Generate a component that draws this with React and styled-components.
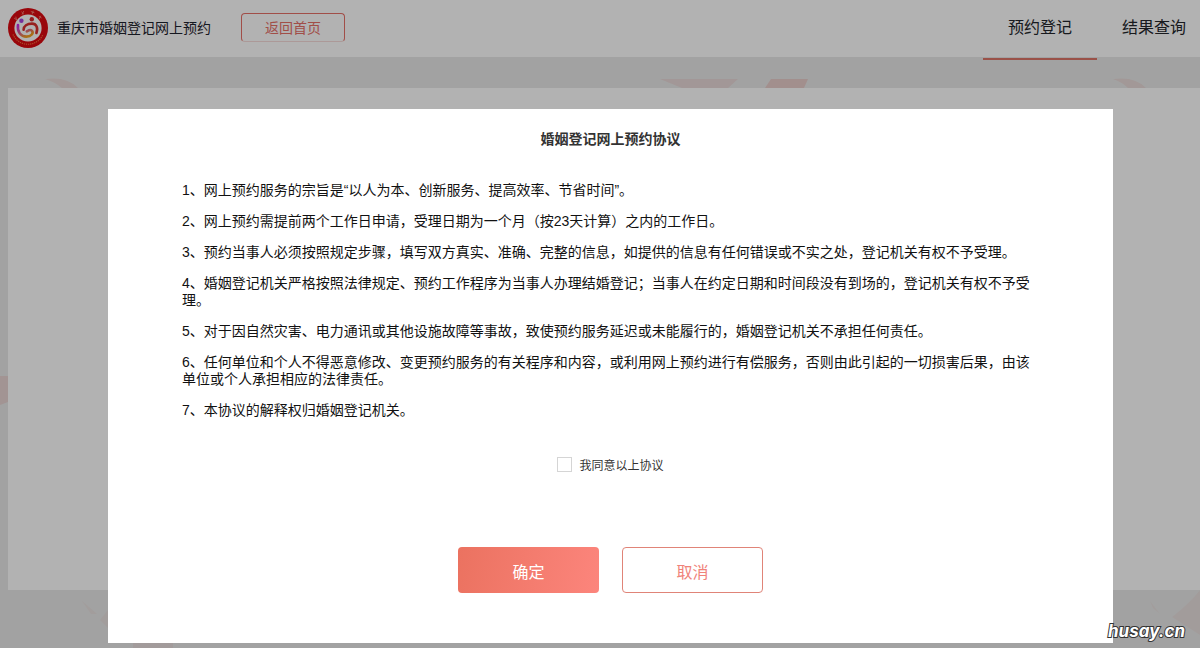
import React, { useState } from "react";
import styled, { createGlobalStyle, css } from "styled-components";

const GlobalStyle = createGlobalStyle`
  *, *::before, *::after { box-sizing: border-box; }
  body {
    margin: 0;
    background: #e9e9e9;
    color: #333;
    font-family: "Liberation Sans", "Noto Sans CJK SC", sans-serif;
    font-size: 14px;
  }
  button, input { font-family: inherit; }
`;

const Page = styled.div`
  position: relative;
  min-height: 100vh;
  overflow: hidden;
`;

const Header = styled.header`
  position: relative;
  display: flex;
  align-items: center;
  height: 57px;
  padding: 0 0 2px 8px;
  background: #fff;
`;

const Logo = styled.svg`
  flex: none;
  width: 40px;
  height: 40px;
`;

const SiteName = styled.span`
  margin-left: 9px;
  color: #1f232e;
  line-height: 20px;
`;

const HomeButton = styled.button`
  width: 104px;
  height: 29px;
  margin-left: 30px;
  padding: 0;
  border: 1px solid #e77068;
  border-bottom-color: #f6dcda;
  border-radius: 4px;
  background: transparent;
  color: #e77068;
  font-size: 14px;
  line-height: 20px;
`;

const Nav = styled.nav`
  display: flex;
  align-self: stretch;
  margin-left: auto;
`;

const NavLink = styled.a`
  height: 60px;
  padding: 16px 25px 0;
  border-bottom: 2px solid transparent;
  color: #23262b;
  font-size: 16px;
  line-height: 24px;
  text-decoration: none;

  ${(p) => p.$active && css`border-bottom-color: #dd7467;`}

  &:last-child { padding-right: 14px; }
`;

const Backdrop = styled.svg`
  position: absolute;
  inset: 0;
  width: 100%;
  height: 100%;
`;

const Panel = styled.main`
  position: relative;
  height: 502px;
  margin: 31px 0 0 8px;
  background: #fff;
`;

const Overlay = styled.div`
  position: absolute;
  inset: 0;
  padding: 109px 87px 5px 108px;
  background: rgba(0, 0, 0, 0.3);
`;

const Dialog = styled.section`
  display: flex;
  flex-direction: column;
  align-items: center;
  padding: 20px 74px 50px;
  background: #fff;
`;

const DialogTitle = styled.h1`
  margin: 0 0 33px;
  font-size: 14px;
  font-weight: 700;
  line-height: 20px;
`;

const Terms = styled.div`
  display: flex;
  flex-direction: column;
  gap: 14px;
  width: 100%;
`;

const Term = styled.p`
  margin: 0;
  color: #111;
  line-height: 17px;
`;

const Agree = styled.label`
  display: flex;
  align-items: center;
  gap: 7px;
  height: 20px;
  margin-top: 35px;
  font-size: 12px;
`;

const Checkbox = styled.input`
  appearance: none;
  width: 15px;
  height: 15px;
  margin: 0;
  border: 1px solid #d5d5d5;
  background: #fff;

  &:checked { background: #f57c6f; }
`;

const Actions = styled.div`
  display: flex;
  gap: 23px;
  margin-top: 73px;
`;

const ActionButton = styled.button`
  width: 141px;
  height: 46px;
  padding: 6px 0 0;
  border: ${(p) => (p.$primary ? "0" : "1px solid #e08478")};
  border-radius: 4px;
  background: ${(p) => (p.$primary ? "linear-gradient(100deg, #eb7260, #fc857c)" : "#fff")};
  color: ${(p) => (p.$primary ? "#fff" : "#f0837a")};
  font-size: 16px;
  line-height: 24px;
`;

const Watermark = styled.span`
  position: absolute;
  right: 15px;
  bottom: 7px;
  color: #fff;
  font: italic 700 17px/20px Inter, "Liberation Sans", sans-serif;
  -webkit-text-stroke: 2px #333;
  paint-order: stroke fill;
`;

const terms = [
  "网上预约服务的宗旨是“以人为本、创新服务、提高效率、节省时间”。",
  "网上预约需提前两个工作日申请，受理日期为一个月（按23天计算）之内的工作日。",
  "预约当事人必须按照规定步骤，填写双方真实、准确、完整的信息，如提供的信息有任何错误或不实之处，登记机关有权不予受理。",
  "婚姻登记机关严格按照法律规定、预约工作程序为当事人办理结婚登记；当事人在约定日期和时间段没有到场的，登记机关有权不予受理。",
  "对于因自然灾害、电力通讯或其他设施故障等事故，致使预约服务延迟或未能履行的，婚姻登记机关不承担任何责任。",
  "任何单位和个人不得恶意修改、变更预约服务的有关程序和内容，或利用网上预约进行有偿服务，否则由此引起的一切损害后果，由该单位或个人承担相应的法律责任。",
  "本协议的解释权归婚姻登记机关。",
];

function Emblem() {
  return (
    <Logo viewBox="0 0 40 40" aria-hidden="true">
      <defs>
        <linearGradient id="leftHand" x1="0" y1="0" x2="0.6" y2="1">
          <stop offset="0" stopColor="#c82bea" />
          <stop offset="0.5" stopColor="#d9569a" />
          <stop offset="1" stopColor="#f2a020" />
        </linearGradient>
      </defs>
      <circle cx="20" cy="20" r="20" fill="#dc0a10" />
      <circle cx="20" cy="20" r="13.6" fill="#fff" />
      <path d="M5 26.5 A16.4 16.4 0 0 0 35 26.5" fill="none" stroke="#f5733f" strokeWidth="1.2" strokeDasharray="1.2 0.9" />
      <g stroke="#f58a7e" strokeWidth="0.8" fill="none">
        <path d="M6.2 10.2l3 2M7.8 8.7l.8 3.5M13.4 3.8l2.5 2.4M15.8 3l-1.8 3.6M22.8 3.5l3.6 1.3M25.2 2.8l-1.1 3.6M30.8 8.2l2.8 1.8M32.8 7.8l-1.7 3.6" />
      </g>
      <circle cx="13.4" cy="12.8" r="2.2" fill="#a845e0" />
      <circle cx="23.8" cy="11.2" r="2.2" fill="#d8262a" />
      <path d="M10 17 C9 24 13 28.6 18.4 28.6 C23.4 28.6 26 25 23.8 22.6 C22.2 21 20.2 22.6 18.8 23.4" fill="none" stroke="url(#leftHand)" strokeWidth="2.6" strokeLinecap="round" />
      <path d="M28.4 25 C30.4 19.6 28.2 15.6 24 15.6 C19.2 15.6 15.6 18 15.6 21.8" fill="none" stroke="#d8302e" strokeWidth="2.6" strokeLinecap="round" />
    </Logo>
  );
}

function Petals() {
  return (
    <Backdrop viewBox="0 0 1200 648" preserveAspectRatio="none" aria-hidden="true">
      <g fill="#e8dad8">
        <path d="M45 79 Q67 76 78 88 H62 Q55 82 45 79Z" />
        <path d="M1113 79 Q1135 76 1146 88 H1128 Q1122 82 1113 79Z" />
        <path d="M0 376 H8 V402 L0 405Z" fill="#e8d4d3" />
        <path d="M82 601 L97 614 L91 614Z" opacity="0.5" />
        <path d="M100 620 L108 610 V628Z" opacity="0.5" />
        <path d="M1150 601 L1160 614 L1153 608Z" opacity="0.5" />
        <path d="M1172 617 Q1190 603 1200 590 V635Z" opacity="0.6" />
        <path d="M133 643 H173 V648 H133Z" opacity="0.7" />
      </g>
      <path d="M660 79 H738 L728 88 H682Z" fill="#e8d2d0" opacity="0.7" />
      <path d="M771 79 H808 L804 88 H765Z" fill="#e9c5c3" opacity="0.8" />
    </Backdrop>
  );
}

export default function App() {
  const [agreed, setAgreed] = useState(false);

  return (
    <Page>
      <GlobalStyle />
      <Petals />
      <Header>
        <Emblem />
        <SiteName>重庆市婚姻登记网上预约</SiteName>
        <HomeButton type="button">返回首页</HomeButton>
        <Nav>
          <NavLink href="#booking" $active>预约登记</NavLink>
          <NavLink href="#results">结果查询</NavLink>
        </Nav>
      </Header>
      <Panel />
      <Overlay>
        <Dialog role="dialog" aria-modal="true" aria-labelledby="agreement-title">
          <DialogTitle id="agreement-title">婚姻登记网上预约协议</DialogTitle>
          <Terms>
            {terms.map((text, i) => (
              <Term key={text}>{`${i + 1}、${text}`}</Term>
            ))}
          </Terms>
          <Agree htmlFor="agree">
            <Checkbox
              id="agree"
              type="checkbox"
              checked={agreed}
              onChange={(e) => setAgreed(e.target.checked)}
            />
            我同意以上协议
          </Agree>
          <Actions>
            <ActionButton type="button" $primary>确定</ActionButton>
            <ActionButton type="button">取消</ActionButton>
          </Actions>
        </Dialog>
      </Overlay>
      <Watermark>husay.cn</Watermark>
    </Page>
  );
}
